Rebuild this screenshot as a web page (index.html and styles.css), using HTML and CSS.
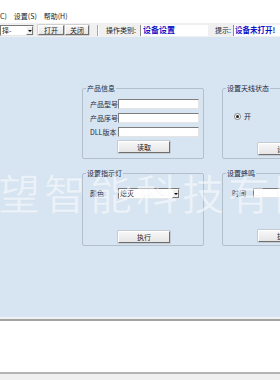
FILE: index.html
```html
<!DOCTYPE html>
<html>
<head>
    <title>设备设置</title>
    <link rel="stylesheet" href="styles.css">
</head>
<body>
    <div class="menubar">
        <span class="menu-item">C)</span>
        <span class="menu-item">设置(S)</span>
        <span class="menu-item">帮助(H)</span>
    </div>

    <div class="toolbar">
        <div class="combo tool-combo"><span class="combo-text">择-</span><span class="combo-btn"></span></div>
        <button class="btn open-btn">打开</button>
        <button class="btn close-btn">关闭</button>
        <span class="sep"></span>
        <span class="tool-label">操作类别:</span>
        <span class="field op-field">设备设置</span>
        <span class="tool-label hint-label">提示:</span>
        <span class="field hint-field">设备未打开!</span>
    </div>

    <div class="main">
        <div class="groups">
            <div class="group info-group">
                <div class="group-title">产品信息</div>
                <div class="fields">
                    <label>产品型号</label><input type="text" class="textbox">
                    <label>产品序号</label><input type="text" class="textbox">
                    <label>DLL版本</label><input type="text" class="textbox">
                </div>
                <button class="btn group-btn">读取</button>
            </div>

            <div class="group">
                <div class="group-title">设置天线状态</div>
                <div class="radio-row">
                    <span class="radio"><span class="radio-dot"></span></span>
                    <span>开</span>
                </div>
                <button class="btn group-btn">设置</button>
            </div>

            <div class="group led-group">
                <div class="group-title">设置指示灯</div>
                <div class="row led-row">
                    <label>颜色</label>
                    <div class="combo led-combo"><span class="combo-text">熄灭</span><span class="combo-btn"></span></div>
                </div>
                <button class="btn group-btn low-btn">执行</button>
            </div>

            <div class="group led-group">
                <div class="group-title">设置蜂鸣</div>
                <div class="row beep-row">
                    <label>时间</label>
                    <input type="text" class="textbox">
                </div>
                <button class="btn group-btn low-btn">执行</button>
            </div>
        </div>

        <div class="watermark">希望智能科技有限公司</div>
    </div>

    <div class="output"></div>
</body>
</html>
```

FILE: styles.css
```css
body {
    margin: 0;
    width: 280px;
    height: 380px;
    overflow: hidden;
    font-family: "Noto Sans CJK SC", "DejaVu Sans", sans-serif;
    font-size: 7px;
    line-height: 9px;
    color: #222;
    background-color: #f0f0f0;
}
.menubar {
    height: 23px;
    box-sizing: border-box;
    padding-top: 12px;
    background-color: #fff;
    display: flex;
    gap: 7px;
}
.toolbar {
    height: 14px;
    display: flex;
    align-items: center;
    background-color: #f0f0f0;
    white-space: nowrap;
    overflow: hidden;
}
.toolbar > * {
    flex-shrink: 0;
}
.combo {
    display: flex;
    align-items: center;
    background-color: #fff;
    border: 1px solid;
    border-color: #7a7a7a #e6e6e6 #e6e6e6 #7a7a7a;
    box-sizing: border-box;
}
.combo-text {
    flex: 1;
    padding-left: 1px;
    white-space: nowrap;
}
.combo-btn {
    width: 7px;
    height: 100%;
    box-sizing: border-box;
    background-color: #f0f0f0;
    border: 1px solid;
    border-color: #fff #777 #777 #fff;
    position: relative;
}
.combo-btn::after {
    content: "";
    position: absolute;
    left: 1px;
    top: 3px;
    border-left: 2px solid transparent;
    border-right: 2px solid transparent;
    border-top: 2px solid #000;
}
.tool-combo {
    width: 34px;
    height: 11px;
}
.btn {
    font-family: inherit;
    font-size: 7px;
    line-height: 8px;
    padding: 0;
    color: #222;
    background: linear-gradient(#f7f7f7, #e6e6e6);
    border: 1px solid;
    border-color: #fff #6f6f6f #6f6f6f #fff;
    box-shadow: 0 0 0 0.5px #b0b0b0;
    box-sizing: border-box;
}
.open-btn {
    width: 26px;
    height: 10px;
    margin-left: 4px;
}
.close-btn {
    width: 24px;
    height: 10px;
    margin-left: 1px;
}
.sep {
    width: 1px;
    height: 11px;
    background-color: #a8a8a8;
    border-right: 1px solid #fff;
    margin-left: 8px;
}
.tool-label {
    margin-left: 7px;
}
.field {
    height: 11px;
    box-sizing: border-box;
    background-color: #fff;
    color: #1010c8;
    font-weight: bold;
    font-size: 8px;
    line-height: 10px;
    padding-left: 2px;
    white-space: nowrap;
    border-left: 1px solid #8a8a8a;
}
.op-field {
    width: 68px;
    margin-left: 4px;
}
.hint-label {
    margin-left: 7px;
}
.hint-field {
    width: 50px;
    margin-left: 2px;
    font-size: 7.5px;
    padding-left: 1px;
}
.main {
    position: relative;
    height: 280px;
    background-color: #d7e5f3;
    border-bottom: 1px solid #eef2f6;
    overflow: hidden;
}
.groups {
    display: grid;
    grid-template-columns: 122px 122px;
    column-gap: 18px;
    row-gap: 14px;
    padding: 51px 0 0 82px;
}
.group {
    height: 71px;
    box-sizing: border-box;
    border: 1px solid #b3bfcb;
    border-radius: 2px;
    padding-left: 7px;
    color: #1a2a44;
}
.led-group {
    height: 73px;
}
.group-title {
    width: fit-content;
    margin: -5px 0 0 -4px;
    padding: 0 1px;
    background-color: #d7e5f3;
}
.fields {
    display: grid;
    grid-template-columns: 28px 81px;
    row-gap: 4px;
    margin-top: 6px;
    align-items: center;
}
.textbox {
    height: 10px;
    box-sizing: border-box;
    margin: 0;
    padding: 0;
    background-color: #fff;
    border: 1px solid;
    border-color: #7d7d7d #e4e4e4 #e4e4e4 #7d7d7d;
}
.group-btn {
    display: block;
    width: 52px;
    height: 12px;
    margin: 4px 0 0 28px;
}
.radio-row {
    display: flex;
    align-items: center;
    gap: 3px;
    margin: 19px 0 0 4px;
}
.radio {
    width: 7px;
    height: 7px;
    box-sizing: border-box;
    border-radius: 50%;
    border: 1px solid #7d7d7d;
    background-color: #fff;
    display: flex;
    align-items: center;
    justify-content: center;
}
.radio-dot {
    width: 3px;
    height: 3px;
    border-radius: 50%;
    background-color: #222;
}
.radio-row + .group-btn {
    margin-top: 22px;
}
.row {
    display: grid;
    align-items: center;
    margin-top: 10px;
}
.led-row {
    grid-template-columns: 28px 62px;
}
.led-combo {
    height: 11px;
}
.beep-row {
    grid-template-columns: 21px 60px;
    padding-left: 2px;
}
.low-btn {
    margin-top: 32px;
}
.watermark {
    position: absolute;
    left: -48px;
    top: 133px;
    font-size: 42px;
    line-height: 44px;
    letter-spacing: 4px;
    white-space: nowrap;
    color: rgba(255, 255, 255, 0.5);
    -webkit-text-stroke: 0.4px rgba(190, 200, 210, 0.3);
    pointer-events: none;
}
.output {
    height: 51px;
    margin-top: 1px;
    background-color: #fff;
    border-top: 2px solid #a3a3a3;
    border-bottom: 2px solid #b4b4b4;
}
```
